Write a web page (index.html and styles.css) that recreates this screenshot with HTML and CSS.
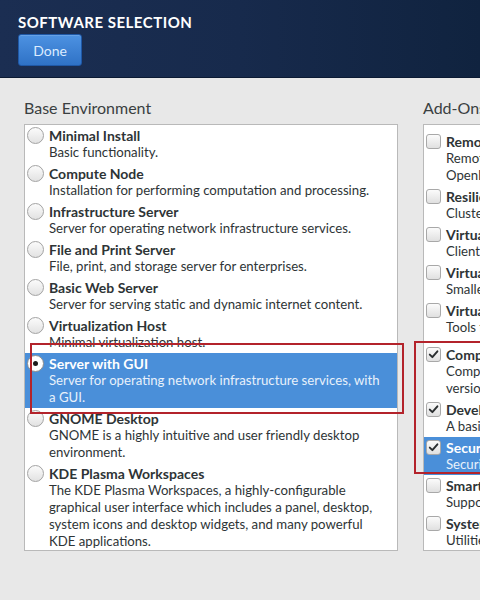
FILE: index.html
```html
<!DOCTYPE html>
<html lang="en">
<head>
    <meta charset="UTF-8" />
    <meta name="viewport" content="width=device-width, initial-scale=1.0"/>
    <title>Software Selection</title>
    <link rel="stylesheet" href="styles.css">
</head>
<body>
    <header class="topbar">
        <h1 class="page-title">SOFTWARE SELECTION</h1>
        <button type="button" class="done-button">Done</button>
    </header>

    <main class="columns">
        <section class="column">
            <h2 class="column-heading">Base Environment</h2>
            <div class="option-list">
                <div class="option">
                    <span class="radio"></span>
                    <div class="option-text">
                        <div class="option-title">Minimal Install</div>
                        <div class="option-desc">Basic functionality.</div>
                    </div>
                </div>
                <div class="option">
                    <span class="radio"></span>
                    <div class="option-text">
                        <div class="option-title">Compute Node</div>
                        <div class="option-desc">Installation for performing computation and processing.</div>
                    </div>
                </div>
                <div class="option">
                    <span class="radio"></span>
                    <div class="option-text">
                        <div class="option-title">Infrastructure Server</div>
                        <div class="option-desc">Server for operating network infrastructure services.</div>
                    </div>
                </div>
                <div class="option">
                    <span class="radio"></span>
                    <div class="option-text">
                        <div class="option-title">File and Print Server</div>
                        <div class="option-desc">File, print, and storage server for enterprises.</div>
                    </div>
                </div>
                <div class="option">
                    <span class="radio"></span>
                    <div class="option-text">
                        <div class="option-title">Basic Web Server</div>
                        <div class="option-desc">Server for serving static and dynamic internet content.</div>
                    </div>
                </div>
                <div class="option">
                    <span class="radio"></span>
                    <div class="option-text">
                        <div class="option-title">Virtualization Host</div>
                        <div class="option-desc">Minimal virtualization host.</div>
                    </div>
                </div>
                <div class="option selected">
                    <span class="radio checked"></span>
                    <div class="option-text">
                        <div class="option-title">Server with GUI</div>
                        <div class="option-desc">Server for operating network infrastructure services, with<br>a GUI.</div>
                    </div>
                </div>
                <div class="option">
                    <span class="radio"></span>
                    <div class="option-text">
                        <div class="option-title">GNOME Desktop</div>
                        <div class="option-desc">GNOME is a highly intuitive and user friendly desktop<br>environment.</div>
                    </div>
                </div>
                <div class="option">
                    <span class="radio"></span>
                    <div class="option-text">
                        <div class="option-title">KDE Plasma Workspaces</div>
                        <div class="option-desc">The KDE Plasma Workspaces, a highly-configurable<br>graphical user interface which includes a panel, desktop,<br>system icons and desktop widgets, and many powerful<br>KDE applications.</div>
                    </div>
                </div>
            </div>
        </section>

        <section class="column">
            <h2 class="column-heading">Add-Ons for Selected Environment</h2>
            <div class="option-list">
                <div class="addon-scroll">
                    <div class="option">
                        <span class="checkbox"></span>
                        <div class="option-text">
                            <div class="option-title">Remote Desktop Clients</div>
                            <div class="option-desc">Alternate remote desktop clients.</div>
                        </div>
                    </div>
                    <div class="option">
                        <span class="checkbox"></span>
                        <div class="option-text">
                            <div class="option-title">Remote Management for Linux</div>
                            <div class="option-desc">Remote management interface for CentOS Linux, including<br>OpenLMI and SNMP.</div>
                        </div>
                    </div>
                    <div class="option">
                        <span class="checkbox"></span>
                        <div class="option-text">
                            <div class="option-title">Resilient Storage</div>
                            <div class="option-desc">Clustered storage, including the GFS2 file system.</div>
                        </div>
                    </div>
                    <div class="option">
                        <span class="checkbox"></span>
                        <div class="option-text">
                            <div class="option-title">Virtualization Client</div>
                            <div class="option-desc">Clients for installing and managing virtualization instances.</div>
                        </div>
                    </div>
                    <div class="option">
                        <span class="checkbox"></span>
                        <div class="option-text">
                            <div class="option-title">Virtualization Hypervisor</div>
                            <div class="option-desc">Smallest possible virtualization host installation.</div>
                        </div>
                    </div>
                    <div class="option">
                        <span class="checkbox"></span>
                        <div class="option-text">
                            <div class="option-title">Virtualization Tools</div>
                            <div class="option-desc">Tools for offline virtual image management.</div>
                        </div>
                    </div>

                    <div class="list-separator"></div>

                    <div class="option">
                        <span class="checkbox checked">
                            <svg viewBox="0 0 15 15"><path d="M3.2 7.6 L6.2 10.6 L12 3.8"/></svg>
                        </span>
                        <div class="option-text">
                            <div class="option-title">Compatibility Libraries</div>
                            <div class="option-desc">Compatibility libraries for applications built on previous<br>versions of CentOS Linux.</div>
                        </div>
                    </div>
                    <div class="option">
                        <span class="checkbox checked">
                            <svg viewBox="0 0 15 15"><path d="M3.2 7.6 L6.2 10.6 L12 3.8"/></svg>
                        </span>
                        <div class="option-text">
                            <div class="option-title">Development Tools</div>
                            <div class="option-desc">A basic development environment.</div>
                        </div>
                    </div>
                    <div class="option selected">
                        <span class="checkbox checked">
                            <svg viewBox="0 0 15 15"><path d="M3.2 7.6 L6.2 10.6 L12 3.8"/></svg>
                        </span>
                        <div class="option-text">
                            <div class="option-title">Security Tools</div>
                            <div class="option-desc">Security tools for integrity and trust verification.</div>
                        </div>
                    </div>
                    <div class="option">
                        <span class="checkbox"></span>
                        <div class="option-text">
                            <div class="option-title">Smart Card Support</div>
                            <div class="option-desc">Support for using smart card authentication.</div>
                        </div>
                    </div>
                    <div class="option">
                        <span class="checkbox"></span>
                        <div class="option-text">
                            <div class="option-title">System Administration Tools</div>
                            <div class="option-desc">Utilities useful in system administration.</div>
                        </div>
                    </div>
                </div>
            </div>
        </section>
    </main>

    <!-- red callout frames drawn over the lists -->
    <div class="callout callout-env"></div>
    <div class="callout callout-addons"></div>
</body>
</html>
```

FILE: styles.css
```css
body {
    font-family: Lato, "DejaVu Sans", sans-serif;
    background-color: #e8e8e8;
    color: #2e3436;
    margin: 0;
    width: 480px;
    height: 600px;
    overflow: hidden;
    position: relative;
}

.topbar {
    height: 78px;
    box-sizing: border-box;
    padding: 12px 18px 0;
    background: linear-gradient(90deg, #1b2e52 0%, #172a4c 50%, #10233f 100%);
    border-bottom: 1px solid #0b1a33;
}

.page-title {
    margin: 0;
    font-size: 15px;
    font-weight: 700;
    line-height: 20px;
    color: #fff;
    letter-spacing: 0.5px;
}

.done-button {
    margin-top: 2px;
    width: 64px;
    height: 32px;
    border: 1px solid #1f58a6;
    border-radius: 3px;
    background: linear-gradient(#4d92e2, #2f72c6);
    color: #dcecff;
    font-family: Lato, "DejaVu Sans", sans-serif;
    font-size: 14px;
    padding: 0;
    box-shadow: inset 0 1px 0 rgba(255, 255, 255, .15);
}

.columns {
    display: flex;
    gap: 25px;
    padding: 20px 0 0 24px;
}

.column {
    flex: 0 0 374px;
}

.column-heading {
    margin: 0 0 6px;
    font-size: 16px;
    font-weight: 400;
    line-height: 20px;
    color: #3a3f41;
    white-space: nowrap;
}

.option-list {
    background-color: #fff;
    border: 1px solid #b9b9b9;
    height: 427px;
    box-sizing: border-box;
    overflow: hidden;
}

/* add-on list is scrolled a little past its first entry */
.addon-scroll {
    margin-top: -32px;
}

.option {
    display: flex;
    gap: 5px;
    padding: 2px;
    font-size: 13.2px;
    line-height: 17px;
}

.option-text {
    flex: 1;
    white-space: nowrap;
}

.option-title {
    font-size: 14px;
    font-weight: 700;
}

.option.selected {
    background-color: #4a8fd9;
    color: #fff;
}

.option.selected .option-desc {
    color: #e8f1fb;
}

.radio {
    flex: 0 0 17px;
    height: 17px;
    box-sizing: border-box;
    border: 1px solid #a3a3a3;
    border-radius: 50%;
    background: linear-gradient(#fbfbfb, #e2e2e2);
    position: relative;
}

.radio.checked {
    background: #fff;
    border-color: #8f8f8f;
}

.radio.checked::after {
    content: "";
    position: absolute;
    left: 5px;
    top: 5px;
    width: 5px;
    height: 5px;
    border-radius: 50%;
    background-color: #1c1c1c;
}

.checkbox {
    flex: 0 0 15px;
    height: 15px;
    margin-top: 1px;
    box-sizing: border-box;
    border: 1px solid #a8a8a8;
    border-radius: 3px;
    background: linear-gradient(#fbfbfb, #e0e0e0);
}

.checkbox svg {
    display: block;
    width: 13px;
    height: 13px;
}

.checkbox path {
    fill: none;
    stroke: #2a2e30;
    stroke-width: 2.2;
    stroke-linecap: round;
    stroke-linejoin: round;
}

.list-separator {
    height: 6px;
}

.callout {
    position: absolute;
    border: 2px solid #b3232b;
    box-sizing: border-box;
}

.callout-env {
    left: 30px;
    top: 343px;
    width: 374px;
    height: 71px;
}

.callout-addons {
    left: 414px;
    top: 341px;
    width: 100px;
    height: 133px;
}
```
